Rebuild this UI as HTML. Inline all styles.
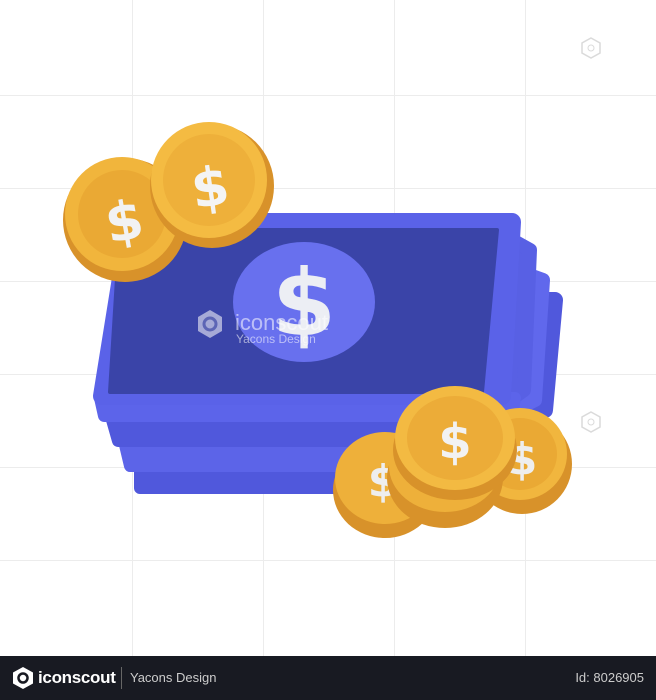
<!DOCTYPE html>
<html><head><meta charset="utf-8"><style>
body{margin:0;width:656px;height:700px;background:#fff;overflow:hidden;font-family:"Liberation Sans",sans-serif}
.bar{position:absolute;left:0;top:656px;width:656px;height:44px;background:#181a22;color:#fff}
</style></head><body>
<svg width="656" height="656" style="position:absolute;left:0;top:0">
<g stroke="#ececec" stroke-width="1">
<line x1="132.5" y1="0" x2="132.5" y2="656"/><line x1="263.5" y1="0" x2="263.5" y2="656"/><line x1="394.5" y1="0" x2="394.5" y2="656"/><line x1="525.5" y1="0" x2="525.5" y2="656"/>
<line x1="0" y1="95.5" x2="656" y2="95.5"/><line x1="0" y1="188.5" x2="656" y2="188.5"/><line x1="0" y1="281.5" x2="656" y2="281.5"/><line x1="0" y1="374.5" x2="656" y2="374.5"/><line x1="0" y1="467.5" x2="656" y2="467.5"/><line x1="0" y1="560.5" x2="656" y2="560.5"/>
</g>
<g stroke-linejoin="round">
<polygon points="520,300 555,300 545,410 520,420" fill="#5058dc" stroke="#5058dc" stroke-width="16"/>
<polygon points="515,270 543,280 535,400 515,410" fill="#6068ec" stroke="#6068ec" stroke-width="14"/>
<polygon points="512,240 530,250 524,390 510,400" fill="#5860e4" stroke="#5860e4" stroke-width="14"/>
<polygon points="140,470 500,470 495,488 140,488" fill="#5058dc" stroke="#5058dc" stroke-width="12"/>
<polygon points="125,445 510,445 505,466 130,466" fill="#5c64e8" stroke="#5c64e8" stroke-width="12"/>
<polygon points="112,420 515,420 510,441 118,441" fill="#5058dc" stroke="#5058dc" stroke-width="12"/>
<polygon points="100,398 515,398 512,416 104,416" fill="#5c64ea" stroke="#5c64ea" stroke-width="12"/>
<polygon points="130,222 512,222 502,396 102,396" fill="#5a62e8" stroke="#5a62e8" stroke-width="18"/>
<polygon points="120,230 497,230 482,392 110,392" fill="#3a44a8" stroke="#3a44a8" stroke-width="4"/>
<ellipse cx="304" cy="302" rx="71" ry="60" fill="#6870ee"/>
</g>
<text x="304" y="335" font-size="92" fill="#eceef4" text-anchor="middle" font-family="DejaVu Sans" font-weight="bold">$</text>
<g>
<circle cx="125" cy="220" r="62" fill="#d8922a"/><circle cx="122" cy="214" r="57" fill="#f1b53c"/><circle cx="122" cy="214" r="44" fill="#eaa934"/>
<text x="124" y="240" font-size="54" fill="#f2f2f2" text-anchor="middle" font-family="DejaVu Sans" font-weight="bold" transform="rotate(-10 124 220)">$</text>
<circle cx="212" cy="186" r="62" fill="#d8922a"/><circle cx="209" cy="180" r="58" fill="#f4bb42"/><circle cx="209" cy="180" r="46" fill="#eeb03a"/>
<text x="210" y="206" font-size="54" fill="#f4f4f4" text-anchor="middle" font-family="DejaVu Sans" font-weight="bold" transform="rotate(-8 210 186)">$</text>
</g>
<g>
<ellipse cx="522" cy="464" rx="50" ry="50" fill="#d8922a"/><ellipse cx="520" cy="454" rx="47" ry="46" fill="#f1b63e"/><ellipse cx="520" cy="454" rx="37" ry="36" fill="#eaa934"/>
<text x="522" y="474" font-size="44" font-weight="bold" fill="#eee" text-anchor="middle" font-family="DejaVu Sans">$</text>
<ellipse cx="385" cy="490" rx="52" ry="48" fill="#d8922a"/><ellipse cx="385" cy="478" rx="50" ry="46" fill="#eeb03a"/>
<text x="383" y="496" font-size="44" font-weight="bold" fill="#eee" text-anchor="middle" font-family="DejaVu Sans">$</text>
<ellipse cx="445" cy="478" rx="58" ry="50" fill="#d8922a"/><ellipse cx="445" cy="466" rx="56" ry="46" fill="#eeb03a"/>
<ellipse cx="455" cy="450" rx="62" ry="50" fill="#d8922a"/><ellipse cx="455" cy="438" rx="60" ry="52" fill="#f3ba42"/><ellipse cx="455" cy="438" rx="48" ry="42" fill="#ecac38"/>
<text x="455" y="458" font-size="48" font-weight="bold" fill="#f2f2f2" text-anchor="middle" font-family="DejaVu Sans">$</text>
</g>
<g opacity="0.55">
<polygon points="210,310 222,317 222,331 210,338 198,331 198,317" fill="#fff"/>
<circle cx="210" cy="324" r="6" fill="none" stroke="#7a80c0" stroke-width="3"/>
<text x="235" y="330" font-size="22" fill="#fff">iconscout</text>
<text x="236" y="343" font-size="12" fill="#fff">Yacons Design</text>
</g>
<g opacity="0.3" stroke="#888" fill="none"><polygon points="591,38 600,43 600,53 591,58 582,53 582,43" stroke-width="1.5"/><circle cx="591" cy="48" r="3"/>
<polygon points="591,412 600,417 600,427 591,432 582,427 582,417" stroke-width="1.5"/><circle cx="591" cy="422" r="3"/></g>
</svg>
<div class="bar">
<svg width="24" height="24" style="position:absolute;left:11px;top:10px"><polygon points="12,1 22,6.5 22,17.5 12,23 2,17.5 2,6.5" fill="#fff"/><circle cx="12" cy="12" r="4.5" fill="none" stroke="#181a22" stroke-width="2.5"/></svg>
<div style="position:absolute;left:38px;top:12px;font-size:17px;font-weight:bold;letter-spacing:-0.3px">iconscout</div>
<div style="position:absolute;left:121px;top:11px;width:1px;height:22px;background:#666"></div>
<div style="position:absolute;left:130px;top:14px;font-size:13px;color:#ccc">Yacons Design</div>
<div style="position:absolute;right:12px;top:14px;font-size:13px;color:#ccc">Id: 8026905</div>
</div>
</body></html>
